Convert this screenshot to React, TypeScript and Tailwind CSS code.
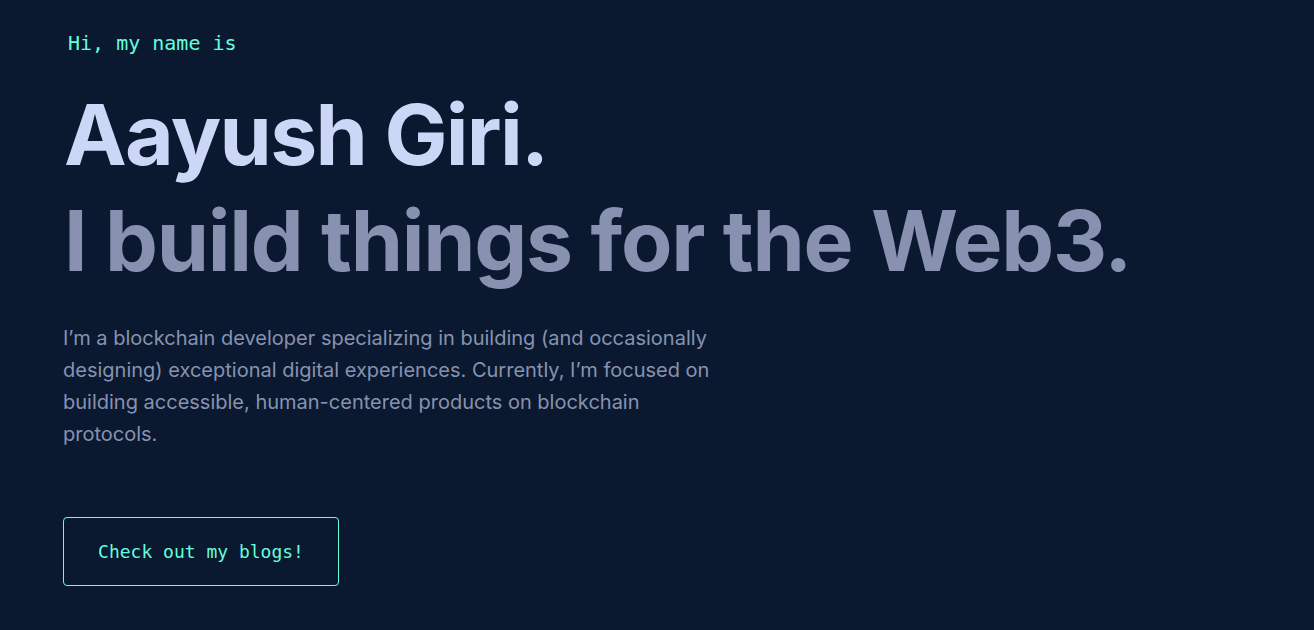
import React from 'react';

const mono = { fontFamily: '"DejaVu Sans Mono", "Liberation Mono", monospace' };

const App = () => {
  return (
    <div className="min-h-[630px] w-full bg-[#0a192f] font-['Inter',sans-serif]">
      <section className="flex flex-col items-start pl-[63px] pt-[33px]">
        <h1
          className="ml-[5px] text-[20px] leading-none text-[#64ffda]"
          style={mono}
        >
          Hi, my name is
        </h1>
        <h2 className="ml-px mt-[36px] text-[84px] font-bold leading-[1.1] tracking-[-0.02em] text-[#ccd6f6]">
          Aayush Giri.
        </h2>
        <h3 className="ml-px mt-[14px] text-[84px] font-bold leading-[1.1] tracking-[-0.015em] text-[#8892b0]">
          I build things for the Web3.
        </h3>
        <p className="mt-[34px] max-w-[660px] text-[20px] leading-[32px] text-[#8892b0]">
          I’m a blockchain developer specializing in building (and occasionally designing)
          exceptional digital experiences. Currently, I’m focused on building accessible,
          human-centered products on blockchain protocols.
        </p>
        <a
          href="#"
          className="mt-[67px] flex h-[69px] w-[276px] items-center justify-center rounded-[4px] border border-[#64ffda] text-[18px] text-[#64ffda]"
          style={mono}
        >
          Check out my blogs!
        </a>
      </section>
    </div>
  );
};

export default App;
